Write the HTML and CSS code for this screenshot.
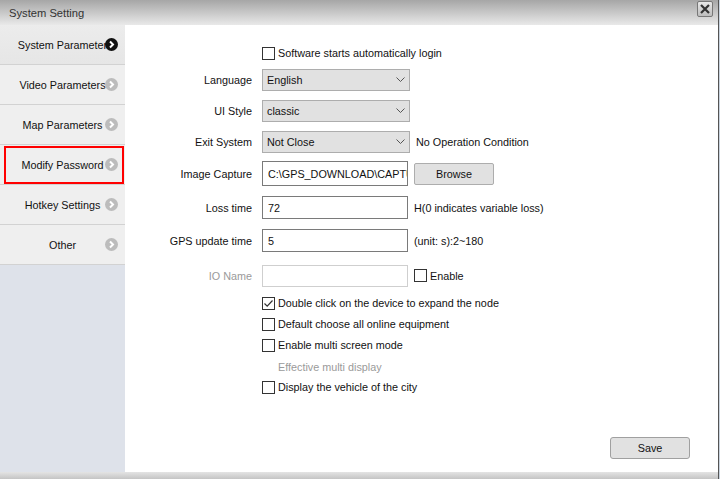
FILE: index.html
```html
<!DOCTYPE html>
<html>
<head>
<meta charset="utf-8">
<link rel="stylesheet" href="styles.css">
</head>
<body>
<div class="window">
  <div class="titlebar">
    <span class="title">System Setting</span>
    <span class="close"><svg width="12" height="12" viewBox="0 0 12 12"><path d="M2 2 L10 10 M10 2 L2 10" stroke="#333" stroke-width="2.2"/></svg></span>
  </div>
  <div class="body">
    <div class="sidebar">
      <div class="item active">System Parameter<span class="arrow"><svg width="13" height="13" viewBox="0 0 13 13"><circle cx="6.5" cy="6.5" r="6.5" fill="#111"/><path d="M5 3.5 L8 6.5 L5 9.5" stroke="#fff" stroke-width="2" fill="none"/></svg></span></div>
      <div class="item">Video Parameters<span class="arrow"><svg width="13" height="13" viewBox="0 0 13 13"><circle cx="6.5" cy="6.5" r="6.5" fill="#bcbcbc"/><path d="M5 3.5 L8 6.5 L5 9.5" stroke="#fff" stroke-width="2" fill="none"/></svg></span></div>
      <div class="item">Map Parameters<span class="arrow"><svg width="13" height="13" viewBox="0 0 13 13"><circle cx="6.5" cy="6.5" r="6.5" fill="#bcbcbc"/><path d="M5 3.5 L8 6.5 L5 9.5" stroke="#fff" stroke-width="2" fill="none"/></svg></span></div>
      <div class="item highlight">Modify Password<span class="arrow"><svg width="13" height="13" viewBox="0 0 13 13"><circle cx="6.5" cy="6.5" r="6.5" fill="#bcbcbc"/><path d="M5 3.5 L8 6.5 L5 9.5" stroke="#fff" stroke-width="2" fill="none"/></svg></span></div>
      <div class="item">Hotkey Settings<span class="arrow"><svg width="13" height="13" viewBox="0 0 13 13"><circle cx="6.5" cy="6.5" r="6.5" fill="#bcbcbc"/><path d="M5 3.5 L8 6.5 L5 9.5" stroke="#fff" stroke-width="2" fill="none"/></svg></span></div>
      <div class="item">Other<span class="arrow"><svg width="13" height="13" viewBox="0 0 13 13"><circle cx="6.5" cy="6.5" r="6.5" fill="#bcbcbc"/><path d="M5 3.5 L8 6.5 L5 9.5" stroke="#fff" stroke-width="2" fill="none"/></svg></span></div>
    </div>
    <div class="content">
      <div class="row r-cb1"><div class="label"></div><div class="ctl"><span class="cb"></span><span class="cbtext">Software starts automatically login</span></div></div>
      <div class="row r-sel1"><div class="label">Language</div><div class="ctl"><div class="select">English<span class="chev"><svg width="9" height="6" viewBox="0 0 9 6"><path d="M0.5 0.5 L4.5 4.5 L8.5 0.5" stroke="#555" fill="none"/></svg></span></div></div></div>
      <div class="row r-sel"><div class="label">UI Style</div><div class="ctl"><div class="select">classic<span class="chev"><svg width="9" height="6" viewBox="0 0 9 6"><path d="M0.5 0.5 L4.5 4.5 L8.5 0.5" stroke="#555" fill="none"/></svg></span></div></div></div>
      <div class="row r-sel"><div class="label">Exit System</div><div class="ctl"><div class="select">Not Close<span class="chev"><svg width="9" height="6" viewBox="0 0 9 6"><path d="M0.5 0.5 L4.5 4.5 L8.5 0.5" stroke="#555" fill="none"/></svg></span></div><span class="note">No Operation Condition</span></div></div>
      <div class="row r-img"><div class="label">Image Capture</div><div class="ctl"><input class="input tall" type="text" readonly value="C:\GPS_DOWNLOAD\CAPTURE"><span class="btn browse">Browse</span></div></div>
      <div class="row r-inp"><div class="label">Loss time</div><div class="ctl"><input class="input" type="text" readonly value="72"><span class="note">H(0 indicates variable loss)</span></div></div>
      <div class="row r-inp"><div class="label">GPS update time</div><div class="ctl"><input class="input" type="text" readonly value="5"><span class="note">(unit: s):2~180</span></div></div>
      <div class="row r-io"><div class="label disabled">IO Name</div><div class="ctl"><input class="input dis" type="text" readonly value=""><span class="cb small-gap"></span><span class="cbtext">Enable</span></div></div>
      <div class="row r-cb2"><div class="label"></div><div class="ctl"><span class="cb checked"><svg width="11" height="11" viewBox="0 0 11 11"><path d="M1.5 5.5 L4.2 8.2 L9.5 2.5" stroke="#333" stroke-width="1.2" fill="none"/></svg></span><span class="cbtext">Double click on the device to expand the node</span></div></div>
      <div class="row r-cb"><div class="label"></div><div class="ctl"><span class="cb"></span><span class="cbtext">Default choose all online equipment</span></div></div>
      <div class="row r-cb"><div class="label"></div><div class="ctl"><span class="cb"></span><span class="cbtext">Enable multi screen mode</span></div></div>
      <div class="row r-eff"><div class="label"></div><div class="ctl"><span class="sub">Effective multi display</span></div></div>
      <div class="row r-cbl"><div class="label"></div><div class="ctl"><span class="cb"></span><span class="cbtext">Display the vehicle of the city</span></div></div>
      <div class="footer"><span class="btn save">Save</span></div>
    </div>
  </div>
  <div class="bottom"></div>
</div>
</body>
</html>
```
FILE: styles.css
```css
html, body {
  margin: 0;
  padding: 0;
}
body {
  width: 720px;
  height: 479px;
  overflow: hidden;
  background: #c9d3de;
  font-family: "Liberation Sans", Arial, sans-serif;
  font-size: 10.8px;
  color: #111;
}
.window {
  width: 718px;
  height: 479px;
  border-right: 1px solid #555;
  display: flex;
  flex-direction: column;
  background: #fff;
}
.titlebar {
  height: 25px;
  flex: none;
  background: linear-gradient(#a6a6a6, #e9e9e9);
  display: flex;
  align-items: center;
  justify-content: space-between;
  padding: 0 5px 0 9px;
}
.title {
  color: #333;
  font-size: 11.2px;
  margin-top: 1px;
}
.close {
  width: 14px;
  height: 14px;
  border: 1px solid #777;
  border-radius: 2px;
  background: linear-gradient(#e8e8e8, #bdbdbd);
  display: flex;
  align-items: center;
  justify-content: center;
  margin-top: -8px;
}
.body {
  flex: 1;
  display: flex;
  min-height: 0;
}
.sidebar {
  width: 125px;
  flex: none;
  background: #dee2ea;
  display: flex;
  flex-direction: column;
}
.item {
  height: 39px;
  border-bottom: 1px solid #d2d2d2;
  background: #efefef;
  display: flex;
  align-items: center;
  justify-content: center;
  position: relative;
  font-size: 10.8px;
  color: #111;
}
.item.active {
  background: linear-gradient(#ececec, #e6e6e6);
}
.item.highlight::after {
  content: "";
  position: absolute;
  left: 4px;
  top: 1px;
  right: 1px;
  bottom: 0px;
  border: 2px solid #ff0000;
}
.arrow {
  position: absolute;
  left: 105px;
  top: 13px;
  width: 13px;
  height: 13px;
}
.content {
  flex: 1;
  display: flex;
  flex-direction: column;
}
.row {
  display: flex;
  align-items: center;
}
.label {
  width: 127px;
  text-align: right;
  margin-right: 10px;
  flex: none;
}
.label.disabled {
  color: #9a9a9a;
}
.ctl {
  display: flex;
  align-items: center;
}
.r-cb1 { height: 18px; margin-top: 19px; }
.r-sel1 { height: 22px; margin-top: 7px; }
.r-sel { height: 22px; margin-top: 9px; }
.r-img { height: 25px; margin-top: 8px; }
.r-inp { height: 23px; margin-top: 10px; }
.r-io { height: 23px; margin-top: 12px; }
.r-cb2 { height: 18px; margin-top: 7px; }
.r-cb { height: 18px; margin-top: 3px; }
.r-eff { height: 18px; margin-top: 4px; }
.r-cbl { height: 18px; margin-top: 2px; }
.cb {
  width: 11px;
  height: 11px;
  border: 1px solid #333;
  background: #fff;
  flex: none;
  display: flex;
  align-items: center;
  justify-content: center;
  margin-right: 3px;
}
.cb.small-gap { margin-left: 6px; }
.sub {
  color: #9a9a9a;
  margin-left: 16px;
}
.select {
  height: 20px;
  border: 1px solid #adadad;
  background: #e1e1e1;
  display: flex;
  align-items: center;
  padding-left: 4px;
  width: 142px;
  position: relative;
}
.chev {
  position: absolute;
  right: 4px;
  top: 7px;
  display: flex;
}
.note {
  margin-left: 6px;
}
.input {
  width: 146px;
  height: 23px;
  box-sizing: border-box;
  border: 1px solid #7a7a7a;
  background: #fff;
  padding: 0 0 0 5px;
  margin: 0;
  font-family: "Liberation Sans", Arial, sans-serif;
  font-size: 10.8px;
  color: #111;
  outline: none;
}
.input.tall {
  height: 25px;
}
.input.dis {
  border-color: #cfcfcf;
  height: 22px;
}
.btn {
  display: flex;
  align-items: center;
  justify-content: center;
  background: #e1e1e1;
  border: 1px solid #adadad;
  border-radius: 2px;
  box-sizing: border-box;
}
.browse {
  width: 80px;
  height: 22px;
  margin-left: 6px;
}
.footer {
  margin-top: auto;
  display: flex;
  justify-content: flex-end;
  padding: 0 28px 13px 0;
}
.save {
  width: 80px;
  height: 22px;
  border-radius: 3px;
  border-color: #a0a0a0;
}
.bottom {
  height: 7px;
  flex: none;
  background: linear-gradient(#e4e4e4, #c4c4c4);
}
```
